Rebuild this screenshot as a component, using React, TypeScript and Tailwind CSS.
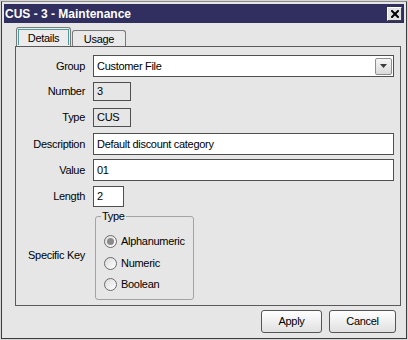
import React from "react";

function Row({ label, mt, children }: { label: string; mt: string; children: React.ReactNode }) {
  return (
    <div className={`grid grid-cols-[69px_1fr] gap-x-[8px] items-center ${mt}`}>
      <span className="text-right leading-none">{label}</span>
      {children}
    </div>
  );
}

function Radio({ label, checked, h }: { label: string; checked?: boolean; h: string }) {
  return (
    <div className={`flex items-center gap-[4px] ${h}`}>
      <span className="w-[13px] h-[13px] rounded-full border border-[#6a6a6a] bg-gradient-to-br from-[#dcdcdc] to-white flex items-center justify-center">
        {checked && <span className="w-[7px] h-[7px] rounded-full bg-[#8a8a8a]" />}
      </span>
      <span className="leading-none">{label}</span>
    </div>
  );
}

export default function App() {
  return (
    <div className="w-[408px] h-[340px] bg-[#d6d6d6] p-px font-['Liberation_Sans',Arial,sans-serif] text-[11px] tracking-[-0.3px] text-black">
      <div className="h-full border border-[#3c3c3c] border-t-[#8c8c8c] bg-[#e6e6e6] p-[2px] flex flex-col">
        {/* title bar */}
        <div className="h-[19px] shrink-0 bg-[#302f60] flex items-center justify-between pl-px pr-[2px]">
          <span className="text-white font-bold text-[12px] tracking-normal leading-none">CUS - 3 - Maintenance</span>
          <button className="w-[15px] h-[14px] bg-[#e2e2e2] border border-t-white border-l-white border-r-[#404040] border-b-[#404040] flex items-center justify-center">
            <svg width="8" height="8" viewBox="0 0 8 8">
              <path d="M1 1L7 7M7 1L1 7" stroke="#000" strokeWidth="2" strokeLinecap="square" />
            </svg>
          </button>
        </div>

        {/* tabs */}
        <div className="mt-[4px] ml-[12px] flex items-end gap-px">
          <div className="w-[55px] h-[19px] border border-b-0 border-[#7a7a7a] rounded-t-[3px] bg-[#ececec] p-px">
            <div className="h-full border border-b-0 border-[#4f9a9a] flex items-center justify-center leading-none pt-px">
              Details
            </div>
          </div>
          <div className="w-[54px] h-[16px] border border-b-0 border-[#7a7a7a] rounded-t-[3px] bg-[#e9e9e9] flex items-center justify-center leading-none pt-px">
            Usage
          </div>
        </div>

        {/* panel */}
        <div className="ml-[11px] mr-[3px] h-[260px] shrink-0 border border-[#5a5a5a] pt-[8px] pr-[6px] flex flex-col">
          <Row label="Group" mt="">
            <div className="h-[22px] border border-[#4f4f4f] bg-white flex items-center justify-between pl-[3px] pr-px">
              <span className="leading-none">Customer File</span>
              <span className="w-[17px] h-[17px] rounded-[2px] border border-[#8e8e8e] bg-gradient-to-b from-[#f6f6f6] to-[#dadada] flex items-center justify-center">
                <svg width="7" height="4" viewBox="0 0 7 4">
                  <path d="M0 0H7L3.5 4Z" fill="#3c3c3c" />
                </svg>
              </span>
            </div>
          </Row>
          <Row label="Number" mt="mt-[5px]">
            <div className="w-[38px] h-[19px] border border-[#4f4f4f] flex items-center pl-[3px] leading-none">3</div>
          </Row>
          <Row label="Type" mt="mt-[7px]">
            <div className="w-[38px] h-[19px] border border-[#4f4f4f] flex items-center pl-[3px] leading-none">CUS</div>
          </Row>
          <Row label="Description" mt="mt-[6px]">
            <div className="h-[22px] border border-[#4f4f4f] bg-white flex items-center pl-[3px] leading-none">
              Default discount category
            </div>
          </Row>
          <Row label="Value" mt="mt-[4px]">
            <div className="h-[22px] border border-[#4f4f4f] bg-white flex items-center pl-[3px] leading-none">01</div>
          </Row>
          <Row label="Length" mt="mt-[5px]">
            <div className="w-[31px] h-[21px] border border-[#4f4f4f] bg-white flex items-center pl-[3px] leading-none">2</div>
          </Row>
          <Row label="Specific Key" mt="mt-[3px]">
            <fieldset className="ml-[2px] w-[99px] border border-[#a4a4a4] rounded-[3px] pl-[8px] pt-[8px] pb-[4px]">
              <legend className="ml-[-3px] px-px leading-[13px]">Type</legend>
              <Radio label="Alphanumeric" checked h="h-[21px]" />
              <Radio label="Numeric" h="h-[22px]" />
              <Radio label="Boolean" h="h-[21px]" />
            </fieldset>
          </Row>
        </div>

        {/* buttons */}
        <div className="mt-[4px] pr-[8px] flex justify-end gap-[7px]">
          <button className="w-[61px] h-[23px] rounded-[3px] border border-[#555] bg-gradient-to-b from-white to-[#e0e0e0] leading-none">
            Apply
          </button>
          <button className="w-[67px] h-[23px] rounded-[3px] border border-[#555] bg-gradient-to-b from-white to-[#e0e0e0] leading-none">
            Cancel
          </button>
        </div>
      </div>
    </div>
  );
}
